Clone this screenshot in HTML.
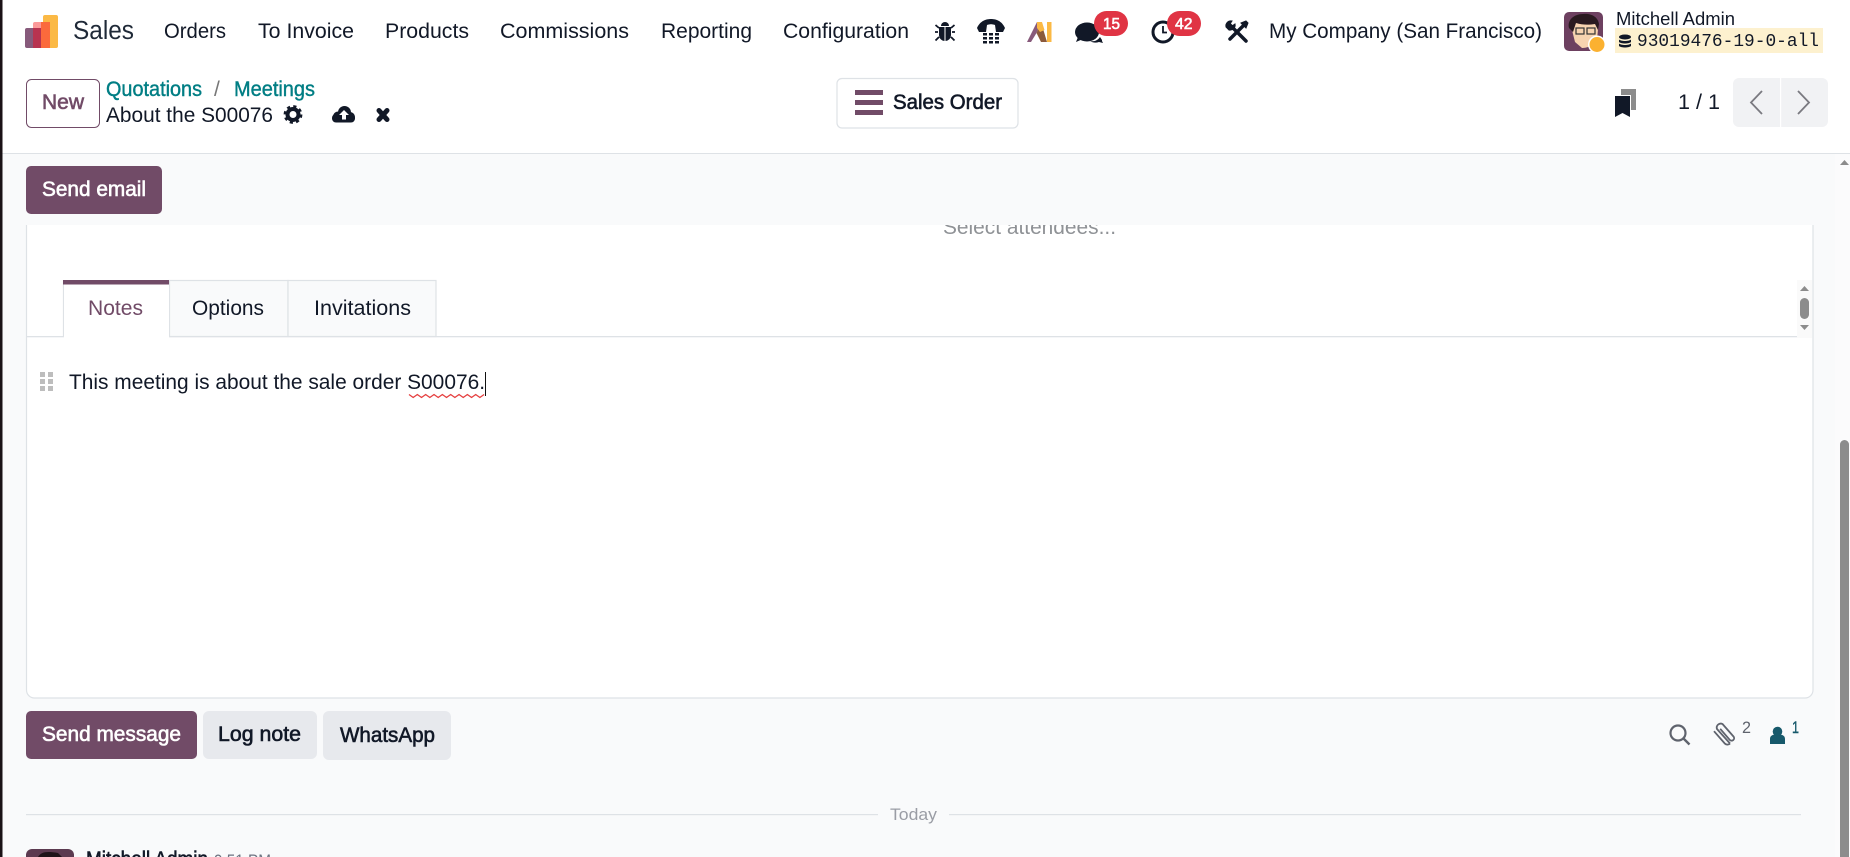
<!DOCTYPE html>
<html>
<head>
<meta charset="utf-8">
<title>Sales</title>
<style>
html,body{margin:0;padding:0;width:1850px;height:857px;overflow:hidden;background:#fff}
svg{display:block}
text{font-family:"Liberation Sans",Arial,sans-serif;fill:#111827;font-size:21px}
.m{stroke-width:.6}
</style>
</head>
<body>
<svg xmlns="http://www.w3.org/2000/svg" width="1850" height="857" viewBox="0 0 1850 857">
<rect width="1850" height="857" fill="#fff"/>
<!-- page bg -->
<rect x="0" y="154" width="1850" height="703" fill="#f9fafb"/>
<rect x="0" y="153" width="1850" height="1.500" fill="#dee2e6"/>
<rect x="1835" y="154" width="15" height="703" fill="#fbfbfc"/>

<!-- sheet -->
<path d="M26.500 220V690a8 8 0 0 0 8 8H1805a8 8 0 0 0 8-8V220Z" fill="#fff" stroke="#dee2e6" stroke-width="1.200"/>
<text x="943" y="234" textLength="173" lengthAdjust="spacingAndGlyphs" style="fill:#8f9296">Select attendees...</text>
<rect x="0" y="154" width="1835" height="71" fill="#f9fafb"/>

<!-- logo -->
<rect x="43" y="15" width="15" height="33" rx="2" fill="#fbb945"/>
<rect x="33" y="22" width="17" height="26" rx="2" fill="#fb9a9a"/>
<rect x="41" y="22" width="9" height="26" fill="#fb6a3c"/>
<rect x="25" y="28" width="16" height="20" rx="2" fill="#875a7b"/>
<rect x="33" y="28" width="8" height="20" fill="#b83350"/>
<text x="73" y="39" textLength="61" lengthAdjust="spacingAndGlyphs" style="font-size:25.500px;fill:#1f2937">Sales</text>

<!-- nav -->
<text x="164" y="38" textLength="62" lengthAdjust="spacingAndGlyphs">Orders</text>
<text x="258" y="38" textLength="96" lengthAdjust="spacingAndGlyphs">To Invoice</text>
<text x="385" y="38" textLength="84" lengthAdjust="spacingAndGlyphs">Products</text>
<text x="500" y="38" textLength="129" lengthAdjust="spacingAndGlyphs">Commissions</text>
<text x="661" y="38" textLength="91" lengthAdjust="spacingAndGlyphs">Reporting</text>
<text x="783" y="38" textLength="126" lengthAdjust="spacingAndGlyphs">Configuration</text>

<!-- bug -->
<g fill="#111827" stroke="#111827">
<path d="M941 26a4 4 0 0 1 8 0Z" stroke="none"/>
<path d="M939 27h12v8a6 6 0 0 1-12 0Z" stroke="none"/>
<path d="M939 28l-3.500-3M951 28l3.500-3M938 32h-3M952 32h3M939 37l-3.500 3.500M951 37l3.500 3.500" stroke-width="1.800" fill="none"/>
<path d="M945 27v14" stroke="#fff" stroke-width="1"/>
</g>
<!-- phone -->
<g fill="#111827">
<path d="M977 28C980 21 986 19 991 19S1002 21 1005 28L1003 32H996L995 25C992 24 990 24 987 25L986 32H979Z"/>
<rect x="983" y="33" width="4" height="2.500"/><rect x="989" y="33" width="4" height="2.500"/><rect x="995" y="33" width="4" height="2.500"/>
<rect x="983" y="37" width="4" height="2.500"/><rect x="989" y="37" width="4" height="2.500"/><rect x="995" y="37" width="4" height="2.500"/>
<rect x="983" y="41" width="4" height="2.500"/><rect x="989" y="41" width="4" height="2.500"/><rect x="995" y="41" width="4" height="2.500"/>
</g>
<!-- AI -->
<path d="M1027 42L1037 22H1041L1036.500 33L1031 42Z" fill="#875a7b"/>
<path d="M1036.500 33L1041 22L1047 42H1041Z" fill="#8b5a3c"/>
<path d="M1037 22H1042L1044.500 30L1040 32L1037 28Z" fill="#fbb945"/>
<rect x="1047" y="22" width="4.500" height="20" fill="#fbb945"/>
<!-- chat -->
<g fill="#111827">
<ellipse cx="1087" cy="32" rx="12" ry="9.500"/>
<path d="M1078 37l-2 5 7-3Z"/>
<path d="M1090 41c5 1 8-1 10-4l2 3v1l1 2-4-1c-3 1-6 1-9-1Z"/>
</g>
<rect x="1094" y="11" width="34" height="25" rx="12.500" fill="#e03444"/>
<text x="1103" y="29" textLength="17" lengthAdjust="spacingAndGlyphs" style="font-size:16px;fill:#fff;stroke:#fff" class="m">15</text>
<!-- clock -->
<circle cx="1163" cy="32" r="10" fill="#fff" stroke="#111827" stroke-width="3"/>
<path d="M1163 26v6.500h4" fill="none" stroke="#111827" stroke-width="1.800"/>
<rect x="1167" y="11" width="34" height="25" rx="12.500" fill="#e03444"/>
<text x="1175" y="29" textLength="17.500" lengthAdjust="spacingAndGlyphs" style="font-size:16px;fill:#fff;stroke:#fff" class="m">42</text>
<!-- tools -->
<g stroke="#111827" fill="none" stroke-linecap="round">
<path d="M1230 25l16 16" stroke-width="3.500"/>
<path d="M1244 25l-14 14" stroke-width="3.500"/>
<path d="M1226 27a5 5 0 0 1 6-6l-2 3 2 2 3-2a5 5 0 0 1-6 6Z" fill="#111827" stroke-width="1"/>
<path d="M1241 23l5-2 2 2-2 5Z" fill="#111827" stroke-width="1"/>
</g>
<!-- company -->
<text x="1269" y="38" textLength="273" lengthAdjust="spacingAndGlyphs">My Company (San Francisco)</text>
<!-- avatar -->
<rect x="1564" y="12" width="39" height="39" rx="5" fill="#6d4060"/>
<path d="M1572 30c0-10 5-13 13-13s13 4 13 12l-1 11c-4 6-10 8-15 8l-7-6Z" fill="#f7d3b0"/>
<path d="M1569 28c-2-8 5-14 14-14 7-1 15 2 16 10l-1 6-3-6c-6 1-13 1-19-1l-3 9Z" fill="#2a1a20"/>
<rect x="1576" y="28" width="8" height="6" fill="none" stroke="#333" stroke-width="1.200"/>
<rect x="1587" y="28" width="8" height="6" fill="none" stroke="#333" stroke-width="1.200"/>
<circle cx="1597" cy="44.500" r="9" fill="#fff"/>
<circle cx="1597" cy="44.500" r="7.500" fill="#fbb130"/>
<text x="1616" y="25" textLength="119" lengthAdjust="spacingAndGlyphs" style="font-size:18.500px">Mitchell Admin</text>
<rect x="1615" y="28" width="208" height="25" fill="#fdf1cf"/>
<g fill="#111827">
<ellipse cx="1625" cy="37" rx="6" ry="2.500"/>
<path d="M1619 39.500c2 2 10 2 12 0v2.500c-2 2-10 2-12 0ZM1619 43.500c2 2 10 2 12 0v2.500c-2 2-10 2-12 0Z"/>
</g>
<text x="1637" y="46" textLength="182" lengthAdjust="spacingAndGlyphs" style="font-family:'Liberation Mono',monospace;font-size:18px">93019476-19-0-all</text>

<!-- New -->
<rect x="26.500" y="79.500" width="73" height="48" rx="5" fill="#fff" stroke="#714b67" stroke-width="1"/>
<text x="42" y="109" textLength="42" lengthAdjust="spacingAndGlyphs" style="fill:#714b67;stroke:#714b67" class="m">New</text>
<!-- breadcrumb -->
<text x="106" y="96" textLength="96" lengthAdjust="spacingAndGlyphs" style="fill:#017e84;stroke:#017e84;stroke-width:.4">Quotations</text>
<text x="214" y="96" style="fill:#777">/</text>
<text x="234" y="96" textLength="81" lengthAdjust="spacingAndGlyphs" style="fill:#017e84;stroke:#017e84;stroke-width:.4">Meetings</text>
<text x="106" y="122" textLength="167" lengthAdjust="spacingAndGlyphs">About the S00076</text>
<!-- gear -->
<circle cx="293" cy="114.500" r="5.500" fill="none" stroke="#111827" stroke-width="4"/>
<circle cx="293" cy="114.500" r="8.200" fill="none" stroke="#111827" stroke-width="2.400" stroke-dasharray="3.200 3.240"/>
<!-- cloud -->
<g fill="#111827">
<rect x="332" y="114" width="23" height="8.500" rx="4"/>
<circle cx="344.500" cy="112.500" r="6.500"/>
<circle cx="338" cy="116.500" r="5"/>
<circle cx="350" cy="117" r="5"/>
</g>
<path d="M344 110l5 5h-3v4.500h-4V115h-3Z" fill="#fff"/>
<!-- X -->
<path d="M379 110.500l8 9M387 110.500l-8 9" stroke="#111827" stroke-width="5" fill="none" stroke-linecap="round"/>

<!-- Sales Order -->
<rect x="837" y="78.500" width="181" height="49.500" rx="5" fill="#fff" stroke="#dee2e6" stroke-width="1.200"/>
<rect x="855" y="90" width="28" height="5" fill="#714b67"/>
<rect x="855" y="100" width="28" height="5" fill="#714b67"/>
<rect x="855" y="110" width="28" height="5" fill="#714b67"/>
<text x="893" y="109" textLength="109" lengthAdjust="spacingAndGlyphs" style="stroke:#111827" class="m">Sales Order</text>

<!-- bookmark -->
<path d="M1621 89h15v21h-5V95h-10Z" fill="#8c8c8c"/>
<path d="M1615 96h15v21l-7.500-4-7.500 4Z" fill="#111827"/>
<text x="1678" y="109" textLength="42" lengthAdjust="spacingAndGlyphs">1 / 1</text>
<rect x="1733" y="78" width="95" height="49" rx="6" fill="#f1f2f4"/>
<rect x="1780" y="78" width="1.200" height="49" fill="#fff"/>
<path d="M1762 91l-11 11.500 11 11.500M1798 91l11 11.500-11 11.500" fill="none" stroke="#7a7a80" stroke-width="1.800"/>

<!-- Send email -->
<rect x="26" y="166" width="136" height="48" rx="5" fill="#714b67"/>
<text x="42" y="196" textLength="104" lengthAdjust="spacingAndGlyphs" style="fill:#fff;stroke:#fff" class="m">Send email</text>

<!-- tabs -->
<rect x="27" y="336" width="1770" height="1.300" fill="#dee2e6"/>
<rect x="169" y="280.500" width="119" height="56" fill="#f9fafb" stroke="#dee2e6" stroke-width="1.200"/>
<rect x="288" y="280.500" width="148" height="56" fill="#f9fafb" stroke="#dee2e6" stroke-width="1.200"/>
<path d="M63.500 280V337M169.500 280V337" stroke="#dee2e6" stroke-width="1.200" fill="none"/>
<rect x="64" y="284" width="105" height="54" fill="#fff"/>
<rect x="63" y="280" width="106" height="4.500" fill="#714b67"/>
<text x="88" y="315" textLength="55" lengthAdjust="spacingAndGlyphs" style="fill:#714b67">Notes</text>
<text x="192" y="315" textLength="72" lengthAdjust="spacingAndGlyphs">Options</text>
<text x="314" y="315" textLength="97" lengthAdjust="spacingAndGlyphs">Invitations</text>

<!-- inner scrollbar -->
<rect x="1797" y="280" width="15" height="58" fill="#fafafa"/>
<path d="M1804.500 286l4.500 5h-9Z" fill="#8c8c8c"/>
<rect x="1800" y="298" width="9" height="21" rx="4.500" fill="#8c8c8c"/>
<path d="M1804.500 330l4.500-5h-9Z" fill="#8c8c8c"/>
<!-- outer scrollbar -->
<path d="M1844.500 160l4.500 5h-9Z" fill="#8c8c8c"/>
<path d="M1840 857V444.500a4.500 4.500 0 0 1 9 0V857Z" fill="#8c8c8c"/>

<!-- note -->
<g fill="#bdbdbd">
<rect x="40" y="372" width="5" height="5"/><rect x="48" y="372" width="5" height="5"/>
<rect x="40" y="379" width="5" height="5"/><rect x="48" y="379" width="5" height="5"/>
<rect x="40" y="386" width="5" height="5"/><rect x="48" y="386" width="5" height="5"/>
</g>
<text x="69" y="389" textLength="416" lengthAdjust="spacingAndGlyphs">This meeting is about the sale order S00076.</text>
<path d="M409 394.500l4.170 3 4.170-3 4.170 3 4.170-3 4.170 3 4.170-3 4.170 3 4.170-3 4.170 3 4.170-3 4.170 3 4.170-3 4.170 3 4.170-3 4.170 3 4.170-3 4.170 3 4.170-3" fill="none" stroke="#e53e3e" stroke-width="1.300"/>
<rect x="485" y="372" width="1" height="24" fill="#111"/>

<!-- chatter buttons -->
<rect x="26" y="711" width="171" height="48" rx="5" fill="#714b67"/>
<text x="42" y="741" textLength="139" lengthAdjust="spacingAndGlyphs" style="fill:#fff;stroke:#fff" class="m">Send message</text>
<rect x="203" y="711" width="114" height="48" rx="6" fill="#e7e9ed"/>
<text x="218" y="741" textLength="83" lengthAdjust="spacingAndGlyphs" style="stroke:#111827" class="m">Log note</text>
<rect x="323" y="711" width="128" height="49" rx="6" fill="#e7e9ed"/>
<text x="340" y="742" textLength="95" lengthAdjust="spacingAndGlyphs" style="stroke:#111827" class="m">WhatsApp</text>

<!-- right icons -->
<circle cx="1678" cy="733" r="7.500" fill="none" stroke="#5f636d" stroke-width="2.200"/>
<path d="M1683.500 738.500l6 6" stroke="#5f636d" stroke-width="2.400" fill="none"/>
<path d="M1731 743.500l-13-14.500a4 4 0 0 1 5.500-5l11 12.500a2.500 2.500 0 0 1-3.800 3.300l-9.500-11M1731 743.500a3.500 3.500 0 0 1-5 .2l-11-12.500" fill="none" stroke="#5f636d" stroke-width="1.800" transform="translate(-1 0)"/>
<text x="1742" y="733" textLength="9" lengthAdjust="spacingAndGlyphs" style="font-size:17px;fill:#5f636d">2</text>
<circle cx="1777.500" cy="731.500" r="4.800" fill="#17596b"/>
<path d="M1770 744v-5c0-3 2-4 4.500-4.500 2 1.500 4 1.500 6 0 2.500.5 4.500 1.500 4.500 4.500v5Z" fill="#17596b"/>
<text x="1792" y="733" textLength="7" lengthAdjust="spacingAndGlyphs" style="font-size:17px;fill:#17596b;stroke:#17596b;stroke-width:.4">1</text>

<!-- today -->
<rect x="26" y="814" width="852" height="1.200" fill="#dee2e6"/>
<rect x="949" y="814" width="852" height="1.200" fill="#dee2e6"/>
<text x="890" y="820" textLength="47" lengthAdjust="spacingAndGlyphs" style="font-size:17px;fill:#9a9da5">Today</text>

<!-- message peek -->
<path d="M26 857v-2a6 6 0 0 1 6-6h36a6 6 0 0 1 6 6v2Z" fill="#5c3a50"/>
<path d="M38 857c3-5 8-6 20-4l4 4Z" fill="#1f1419"/>
<text x="86" y="866" textLength="122" lengthAdjust="spacingAndGlyphs" style="stroke:#111827" class="m">Mitchell Admin</text>
<text x="214" y="866" textLength="57" lengthAdjust="spacingAndGlyphs" style="font-size:17px;fill:#6b7280">9:51 PM</text>

<!-- left strip -->
<rect x="0" y="0" width="2.500" height="857" fill="#1a1216"/>
</svg>
</body>
</html>
